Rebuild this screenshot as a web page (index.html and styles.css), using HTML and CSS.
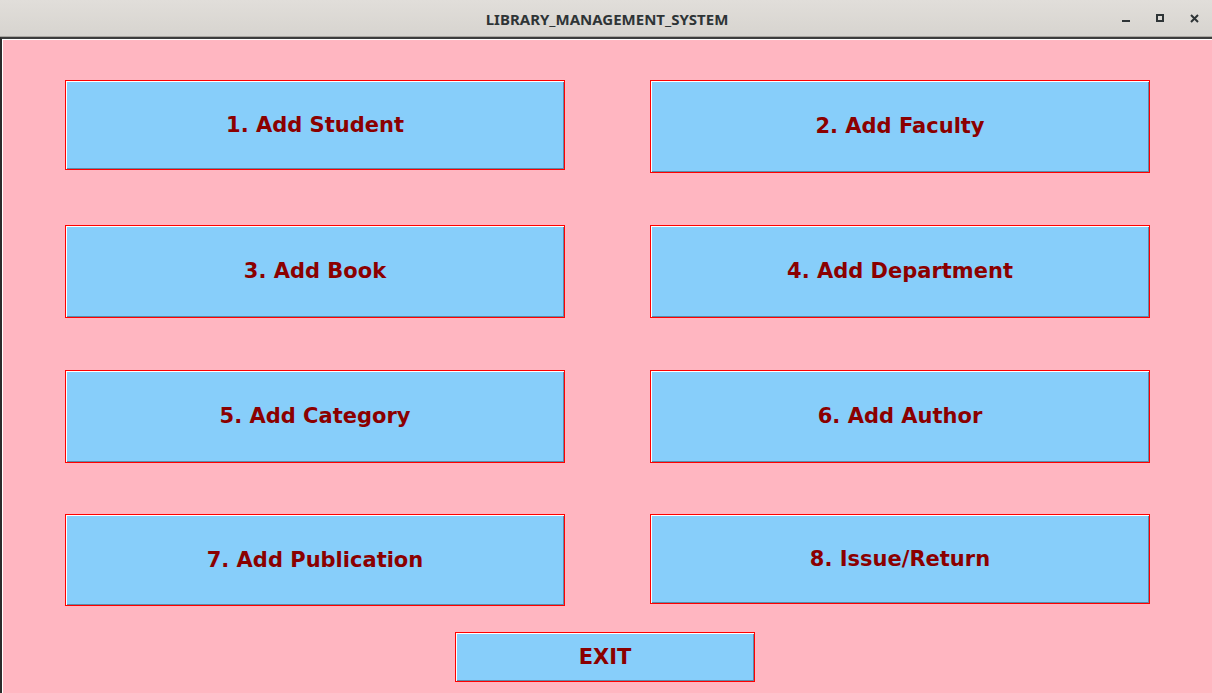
FILE: index.html
```html
<!DOCTYPE html>
<html>
<head>
<meta charset="utf-8">
<title>LIBRARY_MANAGEMENT_SYSTEM</title>
<link rel="stylesheet" href="styles.css">
</head>
<body>
<div class="window">
  <div class="titlebar">
    <div class="title">LIBRARY_MANAGEMENT_SYSTEM</div>
    <div class="controls">
      <svg class="ctl ctl-min" width="8" height="8" viewBox="0 0 8 8"><rect x="0" y="5" width="8" height="2" fill="#2e3436"/></svg>
      <svg class="ctl ctl-max" width="8" height="8" viewBox="0 0 8 8"><rect x="1" y="1" width="6" height="6" fill="none" stroke="#2e3436" stroke-width="2"/></svg>
      <svg class="ctl ctl-close" width="9" height="9" viewBox="0 0 9 9"><path d="M1 1 L8 8 M8 1 L1 8" stroke="#2e3436" stroke-width="2" fill="none"/></svg>
    </div>
  </div>
  <div class="content">
    <div class="grid">
      <div class="btn h90">1. Add Student</div>
      <div class="btn h93">2. Add Faculty</div>
      <div class="btn h93">3. Add Book</div>
      <div class="btn h93">4. Add Department</div>
      <div class="btn h93">5. Add Category</div>
      <div class="btn h93">6. Add Author</div>
      <div class="btn h92">7. Add Publication</div>
      <div class="btn h90">8. Issue/Return</div>
    </div>
    <div class="exit-row">
      <div class="btn exit">EXIT</div>
    </div>
  </div>
</div>
</body>
</html>
```

FILE: styles.css
```css
html, body {
  margin: 0;
  padding: 0;
  width: 1212px;
  height: 693px;
  overflow: hidden;
  background: #2b2b2b;
}

.window {
  width: 1212px;
  height: 693px;
  display: flex;
  flex-direction: column;
}

.titlebar {
  height: 36px;
  flex: 0 0 36px;
  background: linear-gradient(#e1deda, #d7d4cf);
  border-bottom: 1px solid #a9a6a1;
  display: flex;
  align-items: center;
  justify-content: center;
  position: relative;
}

.title {
  font-family: "Noto Sans", "DejaVu Sans", sans-serif;
  font-weight: bold;
  font-size: 15px;
  color: #2e3436;
  margin-left: 2px;
  margin-top: 1px;
}

.controls {
  position: absolute;
  top: 0;
  right: 0;
  height: 36px;
}

.ctl {
  position: absolute;
  display: block;
}

.ctl-min { left: -90px; top: 15px; }
.ctl-max { left: -56px; top: 14px; }
.ctl-close { left: -22px; top: 14px; }

.content {
  flex: 1;
  background: #ffb6c1;
  border-top: 2px solid #3c3c3c;
  border-left: 2px solid #2b2b2b;
  box-shadow: inset 1px 1px 0 #ffffff;
  padding: 41px 0 0 63px;
  display: flex;
  flex-direction: column;
}

.grid {
  display: grid;
  grid-template-columns: 500px 500px;
  grid-template-rows: 145px 145px 144px 118px;
  column-gap: 85px;
  align-items: start;
}

.btn {
  box-sizing: border-box;
  border: 1px solid #ff0000;
  background: #87cefa;
  box-shadow: inset 1px 1px 0 #ffffff, inset -1px -1px 0 #5d8aa6;
  display: flex;
  align-items: center;
  justify-content: center;
  font-family: "DejaVu Sans", sans-serif;
  font-weight: bold;
  font-size: 21px;
  color: #8b0000;
}

.h90 { height: 90px; }
.h92 { height: 92px; }
.h93 { height: 93px; padding-bottom: 1px; }

.exit-row {
  display: flex;
  padding-left: 390px;
}

.exit {
  width: 300px;
  height: 50px;
}
```
